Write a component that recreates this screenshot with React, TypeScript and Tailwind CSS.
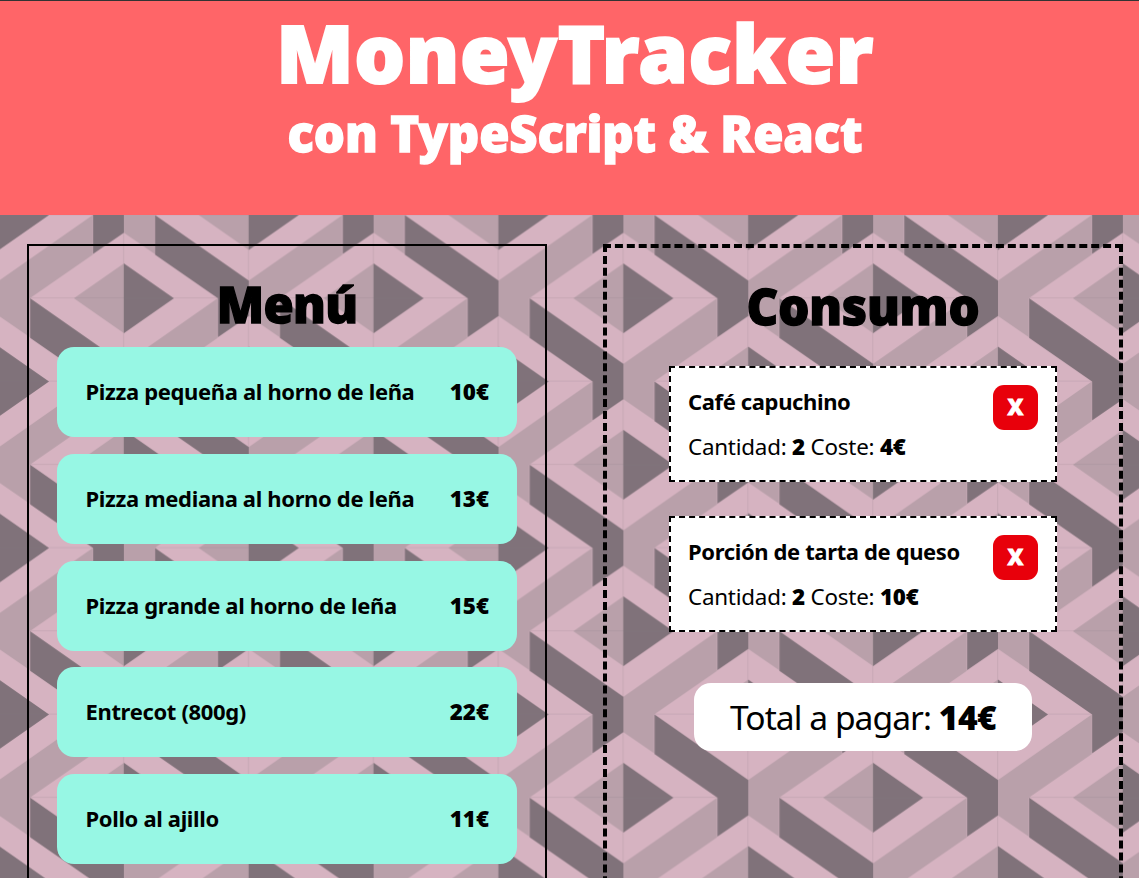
type MenuItem = { name: string; price: number };
type OrderItem = { name: string; quantity: number; cost: number };

const MENU: MenuItem[] = [
  { name: "Pizza pequeña al horno de leña", price: 10 },
  { name: "Pizza mediana al horno de leña", price: 13 },
  { name: "Pizza grande al horno de leña", price: 15 },
  { name: "Entrecot (800g)", price: 22 },
  { name: "Pollo al ajillo", price: 11 },
];

const ORDER: OrderItem[] = [
  { name: "Café capuchino", quantity: 2, cost: 4 },
  { name: "Porción de tarta de queso", quantity: 2, cost: 10 },
];

// Centres of the rhombuses that touch one repeat of the pattern.
const CENTRES = [
  [0, 0],
  [249.75, 0],
  [0, 166.47],
  [249.75, 166.47],
  [124.875, 83.235],
  [124.875, -83.235],
  [0, -166.47],
  [249.75, -166.47],
];

function Backdrop() {
  return (
    <svg className="absolute inset-0 -z-10 h-full w-full" aria-hidden="true">
      <defs>
        <g id="rhombus">
          <path
            fill="#80727a"
            d="M-93.7 0 0 65.5V101L-30.8 122V83.2L-93.7 39.5ZM0-35 50 0 0 35Z"
          />
          <path
            fill="#b9a0aa"
            d="M93.7 0 0 65.5V101L30.8 122V83.2L93.7 39.5ZM0-35-50 0 0 35Z"
          />
          <path
            stroke="#80727a"
            strokeOpacity="0.2"
            strokeWidth="0.9"
            d="M-93.7-.4H93.7M-.3-65.5V65.5"
          />
        </g>
        <pattern
          id="tiles"
          width="249.75"
          height="166.47"
          x="123.9"
          y="83.3"
          patternUnits="userSpaceOnUse"
        >
          <rect width="250" height="167" fill="#d6b3c1" />
          {CENTRES.map(([x, y]) => (
            <use key={`${x},${y}`} href="#rhombus" x={x} y={y} />
          ))}
        </pattern>
      </defs>
      <rect width="100%" height="100%" fill="url(#tiles)" />
    </svg>
  );
}

function MenuRow({ name, price }: MenuItem) {
  return (
    <li className="flex h-[90px] items-center justify-between rounded-[17px] bg-[#97f7e4] px-7 text-[22.4px]">
      <span className="pb-px pl-[0.5px] text-[22px] font-bold tracking-[-0.35px]">{name}</span>
      <span className="font-black">{price}€</span>
    </li>
  );
}

function OrderCard({ name, quantity, cost }: OrderItem) {
  return (
    <li className="flex h-[116px] items-start justify-between border-2 border-dashed border-black bg-white px-[17px] pt-[17px]">
      <div className="text-[22.4px] leading-8">
        <p className="text-[22px] font-bold tracking-[-0.37px]">{name}</p>
        <p className="mt-[14px] tracking-[-0.23px]">
          Cantidad: <b className="font-black">{quantity}</b> Coste:{" "}
          <b className="font-black">{cost}€</b>
        </p>
      </div>
      <button className="flex size-[45px] items-center justify-center rounded-[11px] bg-[#e8000b] pb-[3px] text-[22px] font-black text-white [-webkit-text-stroke:0.8px_white]">
        X
      </button>
    </li>
  );
}

export default function App() {
  const total = ORDER.reduce((sum, item) => sum + item.cost, 0);
  return (
    <div className="flex h-[878px] flex-col overflow-hidden font-['Noto_Sans','Open_Sans',sans-serif] text-black">
      <header className="h-[215px] shrink-0 border-t border-[#333] bg-[#ff6568] pt-[9px] text-center font-black text-white">
        <h1 className="pl-[11px] text-[80px] leading-[84px] tracking-[0.6px] [-webkit-text-stroke:2px_white]">
          MoneyTracker
        </h1>
        <h2 className="mt-[13px] pl-[11px] text-[49px] leading-[52px] tracking-[-0.15px] [-webkit-text-stroke:1.3px_white]">
          con TypeScript &amp; React
        </h2>
      </header>
      <main className="relative isolate flex h-[663px] items-start gap-14 pt-[29px] pl-[27px]">
        <Backdrop />
        <section className="h-[700px] w-[520px] border-2 border-black px-7 pt-8">
          <h2 className="text-center text-[49px] leading-[52px] font-black tracking-[-0.7px] [-webkit-text-stroke:1.3px_black]">
            Menú
          </h2>
          <ul className="mt-[17px] flex flex-col gap-[16.75px]">
            {MENU.map((item) => (
              <MenuRow key={item.name} {...item} />
            ))}
          </ul>
        </section>
        <section className="flex h-[700px] w-[520px] flex-col items-center border-4 border-dashed border-black pt-8">
          <h2 className="text-center text-[49px] leading-[52px] font-black tracking-[-0.2px] [-webkit-text-stroke:1.3px_black]">
            Consumo
          </h2>
          <ul className="mt-[34px] flex w-[388px] flex-col gap-[34px]">
            {ORDER.map((item) => (
              <OrderCard key={item.name} {...item} />
            ))}
          </ul>
          <p className="mt-[51px] flex h-[68px] w-[338px] items-center justify-center rounded-[17px] bg-white text-[33.6px] tracking-[-0.95px] whitespace-pre">
            Total a pagar: <b className="font-black tracking-[-0.6px]">{total}€</b>
          </p>
        </section>
      </main>
    </div>
  );
}
